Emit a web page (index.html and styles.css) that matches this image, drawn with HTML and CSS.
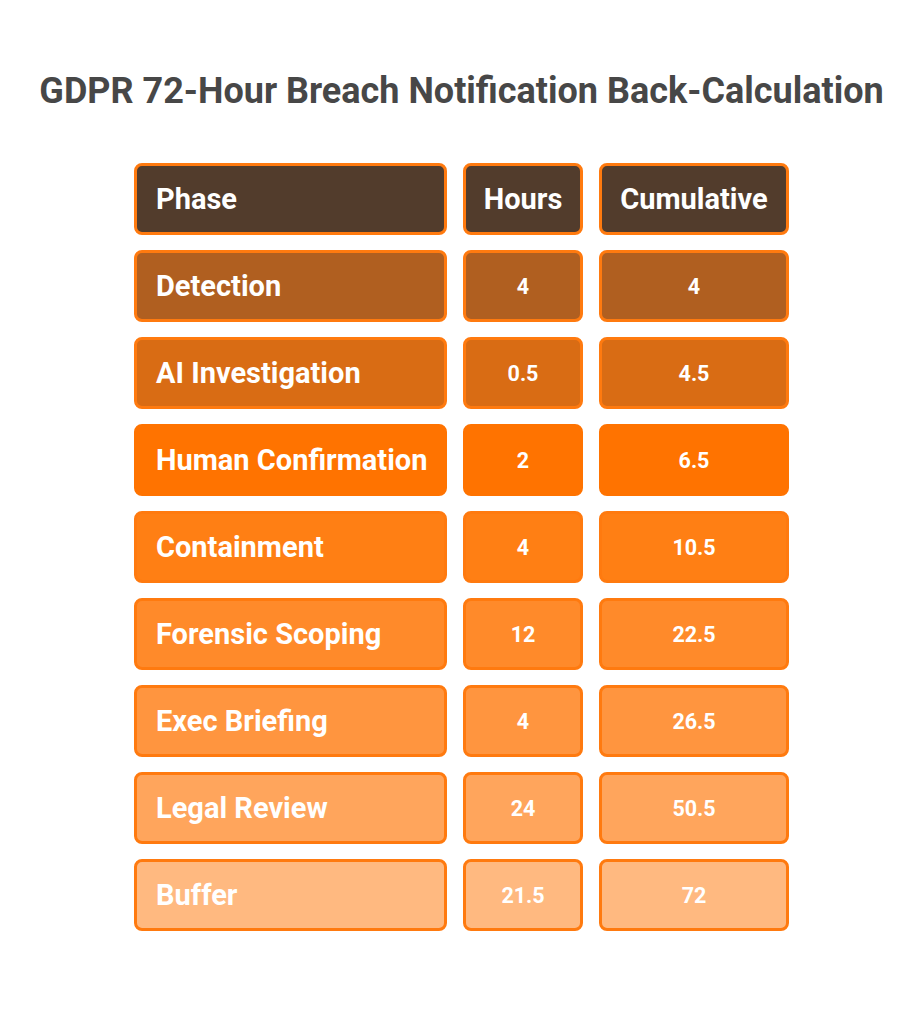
FILE: index.html
```html
<!DOCTYPE html>
<html lang="en">
<head>
    <meta charset="UTF-8">
    <meta name="viewport" content="width=device-width, initial-scale=1.0">
    <title>GDPR 72-Hour Breach Notification Back-Calculation</title>
    <link rel="stylesheet" href="styles.css">
</head>
<body>
    <div class="page">
        <h1>GDPR 72-Hour Breach Notification Back-Calculation</h1>

        <div class="table">
            <div class="cell head phase">Phase</div>
            <div class="cell head">Hours</div>
            <div class="cell head">Cumulative</div>

            <div class="cell row-1 phase">Detection</div>
            <div class="cell row-1 num">4</div>
            <div class="cell row-1 num">4</div>

            <div class="cell row-2 phase">AI Investigation</div>
            <div class="cell row-2 num">0.5</div>
            <div class="cell row-2 num">4.5</div>

            <div class="cell row-3 phase">Human Confirmation</div>
            <div class="cell row-3 num">2</div>
            <div class="cell row-3 num">6.5</div>

            <div class="cell row-4 phase">Containment</div>
            <div class="cell row-4 num">4</div>
            <div class="cell row-4 num">10.5</div>

            <div class="cell row-5 phase">Forensic Scoping</div>
            <div class="cell row-5 num">12</div>
            <div class="cell row-5 num">22.5</div>

            <div class="cell row-6 phase">Exec Briefing</div>
            <div class="cell row-6 num">4</div>
            <div class="cell row-6 num">26.5</div>

            <div class="cell row-7 phase">Legal Review</div>
            <div class="cell row-7 num">24</div>
            <div class="cell row-7 num">50.5</div>

            <div class="cell row-8 phase">Buffer</div>
            <div class="cell row-8 num">21.5</div>
            <div class="cell row-8 num">72</div>
        </div>
    </div>
</body>
</html>
```

FILE: styles.css
```css
body {
    font-family: Roboto, "Liberation Sans", sans-serif;
    margin: 0;
    padding: 0;
    background-color: #ffffff;
}
.page {
    width: 923px;
    display: flex;
    flex-direction: column;
    align-items: center;
}
h1 {
    margin: 69px 0 0;
    height: 44px;
    line-height: 44px;
    font-size: 36px;
    font-weight: 700;
    color: #474747;
    white-space: nowrap;
}
.table {
    margin-top: 50px;
    display: grid;
    grid-template-columns: 313px 120px 190px;
    grid-auto-rows: 72px;
    column-gap: 16px;
    row-gap: 15px;
}
.cell {
    box-sizing: border-box;
    border: 3px solid #ff7a0f;
    border-radius: 8px;
    display: flex;
    align-items: center;
    justify-content: center;
    color: #ffffff;
    font-weight: 700;
    font-size: 21.5px;
}
.phase {
    justify-content: flex-start;
    padding-left: 19px;
    font-size: 29px;
}
.head {
    background-color: #523c2c;
    font-size: 29px;
}
.row-1 { background-color: #b05f20; }
.row-2 { background-color: #d96c14; }
.row-3 { background-color: #ff7300; border-color: #ff7300; }
.row-4 { background-color: #ff7f14; }
.row-5 { background-color: #ff8a2a; }
.row-6 { background-color: #ff953f; }
.row-7 { background-color: #ffa55c; }
.row-8 { background-color: #ffb980; }
```
